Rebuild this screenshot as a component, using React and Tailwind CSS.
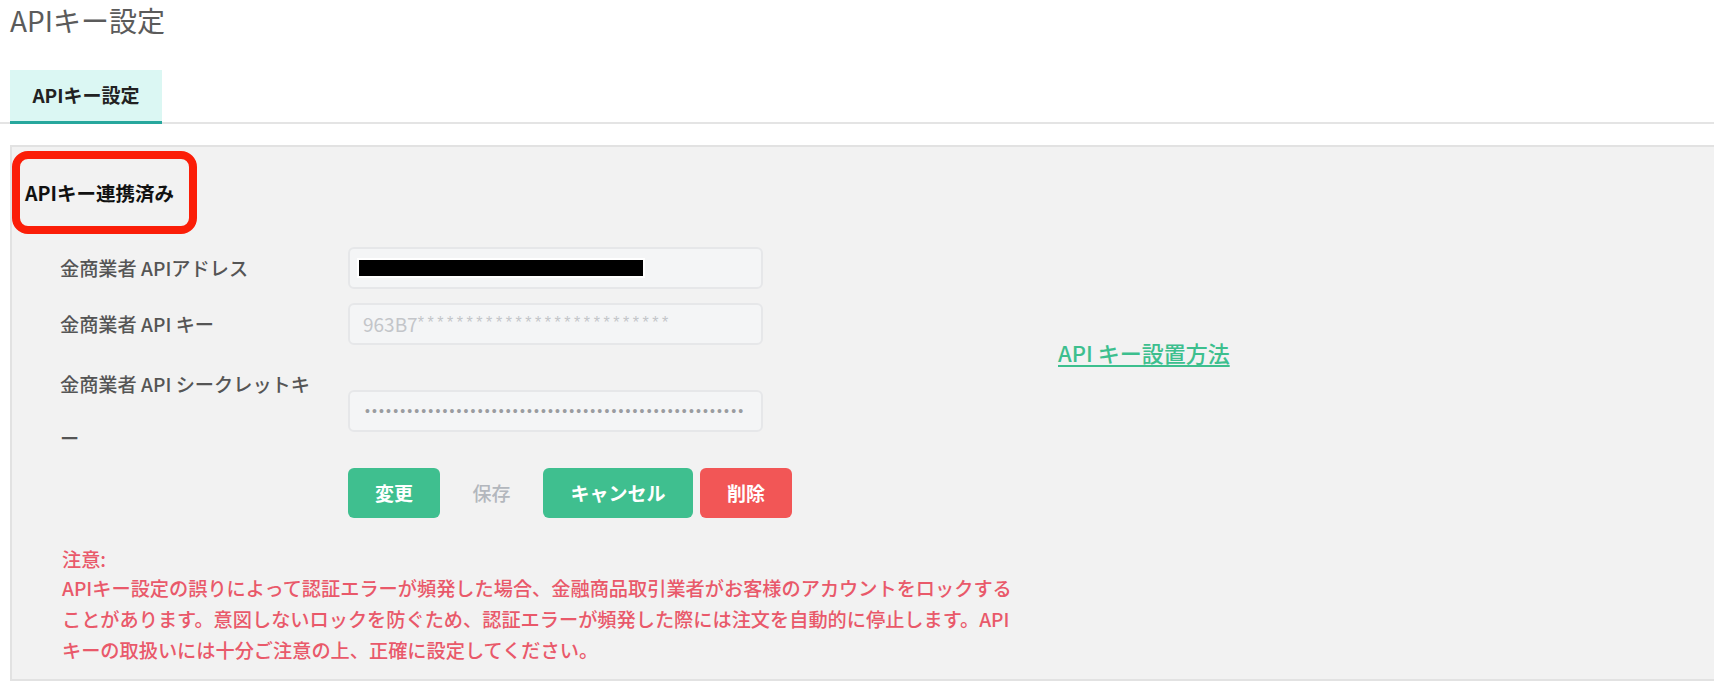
import React from "react";

const fields = [
  { label: "金商業者 APIアドレス", kind: "address" },
  { label: "金商業者 API キー", kind: "key" },
  { label: "secret", kind: "secret" },
];

const Field = ({ kind }) => {
  if (kind === "address") {
    return (
      <div className="w-[415px] h-[42px] rounded-[6px] border-2 border-[#e6e7e9] bg-[#f4f5f6] flex items-center pl-[9px]">
        <div className="w-[284px] h-[16px] bg-black outline-2 outline-white" />
      </div>
    );
  }
  if (kind === "key") {
    return (
      <div className="w-[415px] h-[42px] rounded-[6px] border-2 border-[#e6e7e9] bg-[#f4f5f6] flex items-center pl-[13px] text-[#c3c5c9]">
        <span className="text-[19px]">963B7</span>
        <span className="font-['Liberation_Sans'] text-[16px] tracking-[3.55px] -translate-y-[1px]">
          {"*".repeat(26)}
        </span>
      </div>
    );
  }
  return (
    <div className="w-[415px] h-[42px] rounded-[6px] border-2 border-[#e6e7e9] bg-[#f4f5f6] flex items-center pl-[15px] text-[#9a9ca0]">
      <span className="font-['Liberation_Sans'] text-[14px] tracking-[2.14px] leading-none">
        {"•".repeat(54)}
      </span>
    </div>
  );
};

const App = () => {
  return (
    <div className="min-h-screen bg-white font-['Noto_Sans_CJK_JP',sans-serif]">
      {/* ===== PAGE TITLE ===== */}
      <h1 className="h-[40px] leading-[40px] px-[10px] text-[28px] text-[#5b5b5b]">
        APIキー設定
      </h1>

      {/* ===== TABS ===== */}
      <div className="mt-[30px] flex border-b-2 border-[#e4e4e4]">
        <div className="ml-[10px] -mb-[2px] w-[152px] h-[54px] bg-[#dbf7f3] border-b-[3px] border-[#27a79d] flex items-center justify-center text-[19px] font-bold text-[#222]">
          APIキー設定
        </div>
      </div>

      {/* ===== PANEL ===== */}
      <div className="mt-[21px] ml-[10px] border-2 border-r-0 border-[#e2e2e2] bg-[#f2f2f2] pb-[13px]">
        <div className="mt-[4px] w-[185px] h-[83px] border-[8px] border-[#fb1e08] rounded-[16px] flex items-center pl-[5px]">
          <span className="text-[19.5px] font-bold text-[#111]">APIキー連携済み</span>
        </div>

        <div className="mt-[6px] flex items-center">
          <div className="pl-[48px]">
            {fields.map((f) => (
              <div
                key={f.kind}
                className={
                  f.kind === "secret"
                    ? "mt-[5px] flex items-center"
                    : "h-[56px] flex items-center"
                }
              >
                <div
                  className={
                    f.kind === "secret"
                      ? "w-[265px] mr-[23px] text-[19.2px] font-medium leading-[54px] text-[#555]"
                      : "w-[265px] mr-[23px] text-[19.2px] font-medium text-[#555]"
                  }
                >
                  {f.kind === "secret" ? (
                    <>
                      金商業者 API シークレットキ
                      <br />ー
                    </>
                  ) : (
                    f.label
                  )}
                </div>
                <Field kind={f.kind} />
              </div>
            ))}
          </div>

          <a
            href="#"
            className="ml-[295px] text-[22px] font-medium text-[#3dbf8e] underline decoration-2 underline-offset-[3px]"
          >
            API キー設置方法
          </a>
        </div>

        {/* BUTTONS */}
        <div className="mt-[3px] ml-[336px] flex items-center text-[19px] font-bold">
          <button className="w-[92px] h-[50px] rounded-[6px] bg-[#3fbf8f] text-white">
            変更
          </button>
          <button className="w-[103px] h-[50px] text-[#b3b7bd] font-medium">保存</button>
          <button className="w-[150px] h-[50px] rounded-[6px] bg-[#3fbf8f] text-white">
            キャンセル
          </button>
          <button className="ml-[7px] w-[92px] h-[50px] rounded-[6px] bg-[#f25656] text-white">
            削除
          </button>
        </div>

        {/* NOTE */}
        <div className="mt-[27px] pl-[50px] text-[19.2px] font-medium text-[#e9596a]">
          <div className="leading-[28px]">注意:</div>
          <p className="leading-[31px]">
            APIキー設定の誤りによって認証エラーが頻発した場合、金融商品取引業者がお客様のアカウントをロックする
            <br />
            ことがあります。意図しないロックを防ぐため、認証エラーが頻発した際には注文を自動的に停止します。API
            <br />
            キーの取扱いには十分ご注意の上、正確に設定してください。
          </p>
        </div>
      </div>
    </div>
  );
};

export default App;
